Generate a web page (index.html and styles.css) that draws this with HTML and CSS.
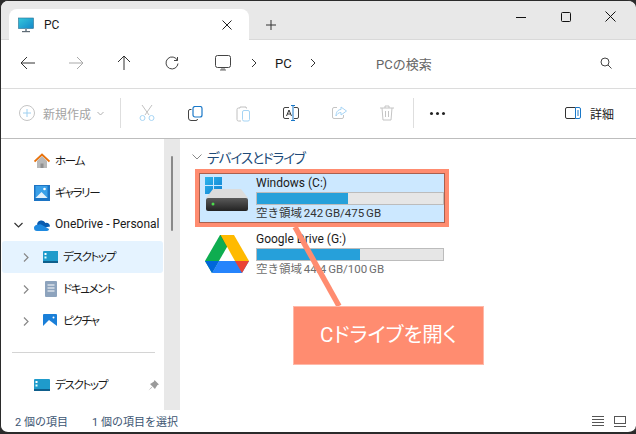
FILE: index.html
```html
<!DOCTYPE html>
<html lang="ja">
<head>
    <meta charset="UTF-8">
    <title>PC</title>
    <link rel="stylesheet" href="styles.css">
</head>
<body>
<div class="window">
    <!-- tab strip -->
    <div class="tabbar">
        <div class="tab">
            <svg class="tab-icon" width="16" height="16" viewBox="0 0 16 16"><defs><linearGradient id="scr" x1="0" y1="0" x2="1" y2="1"><stop offset="0" stop-color="#35c7dc"/><stop offset="1" stop-color="#1487c9"/></linearGradient></defs><rect x="0.5" y="1" width="15" height="10.5" fill="url(#scr)" stroke="#2a6f90" stroke-width="0.6"/><rect x="7" y="11.5" width="2" height="3" fill="#8a98a3"/><rect x="4" y="14" width="8" height="1.2" fill="#5f6b75"/></svg>
            <span class="tab-title">PC</span>
            <svg class="tab-close" width="10" height="10" viewBox="0 0 10 10"><path d="M.5.5l9 9M9.500.5l-9 9" stroke="#222" fill="none"/></svg>
        </div>
        <svg class="tab-plus" width="10" height="10" viewBox="0 0 10 10"><path d="M5 0v10M0 5h10" stroke="#333" fill="none"/></svg>
        <div class="win-controls">
            <span class="win-btn"><svg width="10" height="10" viewBox="0 0 10 10"><path d="M0 5.500h10" stroke="#111" fill="none"/></svg></span>
            <span class="win-btn"><svg width="10" height="10" viewBox="0 0 10 10"><rect x=".5" y=".5" width="9" height="9" rx="1" stroke="#111" fill="none"/></svg></span>
            <span class="win-btn"><svg width="11" height="11" viewBox="0 0 11 11"><path d="M.5.5l10 10M10.500.5l-10 10" stroke="#111" fill="none"/></svg></span>
        </div>
    </div>

    <!-- address row -->
    <div class="navbar">
        <span class="nav-btn"><svg width="16" height="14" viewBox="0 0 16 14"><path d="M15 7H1M7 1L1 7l6 6" stroke="#333" fill="none"/></svg></span>
        <span class="nav-btn"><svg width="16" height="14" viewBox="0 0 16 14"><path d="M1 7h14M9 1l6 6-6 6" stroke="#a9a9a9" fill="none"/></svg></span>
        <span class="nav-btn"><svg width="14" height="16" viewBox="0 0 14 16"><path d="M7 15V1M1 7l6-6 6 6" stroke="#333" fill="none"/></svg></span>
        <span class="nav-btn"><svg width="14" height="14" viewBox="0 0 14 14"><path d="M12.500 4.500A6 6 0 1 0 13 7.500M12.500 1v3.500H9" stroke="#444" fill="none"/></svg></span>
        <div class="crumbs">
            <svg width="16" height="16" viewBox="0 0 16 16"><rect x=".5" y=".5" width="15" height="12" rx="2" stroke="#444" fill="none"/><path d="M5 15h6M7 13v2M9 13v2" stroke="#666" fill="none"/></svg>
            <svg class="crumb-sep" width="6" height="10" viewBox="0 0 6 10"><path d="M1 1l4 4-4 4" stroke="#333" fill="none"/></svg>
            <span class="crumb">PC</span>
            <svg class="crumb-sep" width="6" height="10" viewBox="0 0 6 10"><path d="M1 1l4 4-4 4" stroke="#333" fill="none"/></svg>
        </div>
        <span class="search-text">PCの検索</span>
        <svg class="search-icon" width="12" height="12" viewBox="0 0 12 12"><circle cx="5" cy="5" r="4" stroke="#444" fill="none"/><path d="M8 8l3.500 3.500" stroke="#444" fill="none"/></svg>
    </div>

    <!-- command bar -->
    <div class="toolbar">
        <div class="new-btn">
            <svg width="16" height="16" viewBox="0 0 16 16"><circle cx="8" cy="8" r="7.500" stroke="#c4c4c4" fill="none"/><path d="M8 4v8M4 8h8" stroke="#9fd0f0" fill="none"/></svg>
            <span>新規作成</span>
            <svg width="7" height="5" viewBox="0 0 7 5"><path d="M.5 1l3 3 3-3" stroke="#b0b0b0" fill="none"/></svg>
        </div>
        <span class="tool-sep"></span>
        <span class="tool-btn"><svg width="16" height="16" viewBox="0 0 16 16"><path d="M3 0l7 10M13 0L6 10" stroke="#c0c0c0" fill="none"/><circle cx="3.500" cy="13" r="2.500" stroke="#a6d4f4" fill="none"/><circle cx="12.500" cy="13" r="2.500" stroke="#a6d4f4" fill="none"/></svg></span>
        <span class="tool-btn"><svg width="15" height="15" viewBox="0 0 15 15"><path d="M3.500 3.500H2a1.500 1.500 0 0 0-1.500 1.500v7A2.500 2.500 0 0 0 3 14.500h5a1.500 1.500 0 0 0 1.500-1.500" stroke="#444" fill="none"/><rect x="5" y=".5" width="9" height="10.500" rx="2" stroke="#1a78c8" stroke-width="1.200" fill="none"/></svg></span>
        <span class="tool-btn"><svg width="15" height="17" viewBox="0 0 15 17"><path d="M4 3H2.500A1.500 1.500 0 0 0 1 4.500v10A1.500 1.500 0 0 0 2.500 16H5M4 3V2h6v1h1" stroke="#c0c0c0" fill="none"/><rect x="6.500" y="5.500" width="7" height="10.500" rx="1.500" stroke="#a6d4f4" fill="none"/></svg></span>
        <span class="tool-btn"><svg width="16" height="16" viewBox="0 0 16 16"><path d="M6 2.500H2A1.500 1.500 0 0 0 .5 4v8A1.500 1.500 0 0 0 2 13.500h4M11 2.500h3A1.500 1.500 0 0 1 15.500 4v8a1.500 1.500 0 0 1-1.500 1.500h-3" stroke="#444" fill="none"/><path d="M3.500 11l2.500-6 2.500 6M4.500 9h3" stroke="#333" fill="none"/><path d="M8 .5h4M8 15.500h4M10 .5v15" stroke="#1a78c8" fill="none"/></svg></span>
        <span class="tool-btn"><svg width="15" height="14" viewBox="0 0 15 14"><path d="M5 1.500H2A1.500 1.500 0 0 0 .5 3v8A1.500 1.500 0 0 0 2 12.500h8a1.500 1.500 0 0 0 1.500-1.500V9" stroke="#c4c4c4" fill="none"/><path d="M9 1l5.500 4L9 9V6.500C6.500 6.500 5 8 4 10c0-4 2-6.500 5-6.500z" stroke="#a6d4f4" fill="none"/></svg></span>
        <span class="tool-btn"><svg width="14" height="16" viewBox="0 0 14 16"><path d="M0 3h14M5 3V1h4v2M2 3l1 12h8l1-12M5.500 6v6M8.500 6v6" stroke="#c4c4c4" fill="none"/></svg></span>
        <span class="tool-sep sep-2"></span>
        <span class="dots"><i></i><i></i><i></i></span>
        <div class="details">
            <svg width="16" height="12" viewBox="0 0 16 12"><path d="M10.500.5H2A1.500 1.500 0 0 0 .5 2v8A1.500 1.500 0 0 0 2 11.500h8.500" stroke="#333" fill="none"/><path d="M10.500.5v11h3.500a1.500 1.500 0 0 0 1.500-1.500V2A1.500 1.500 0 0 0 14 .5z" stroke="#1a78c8" fill="none"/><path d="M12 4h2M12 6h2M12 8h2" stroke="#1a78c8" fill="none"/></svg>
            <span>詳細</span>
        </div>
    </div>

    <div class="main">
        <!-- left pane -->
        <div class="sidebar">
            <div class="side-row lvl-0">
                <span class="chev"></span>
                <svg width="16" height="16" viewBox="0 0 16 16"><path d="M3 8v7h10V8L8 3z" fill="#b8b8b8"/><rect x="6.500" y="10.500" width="3" height="4.500" fill="#8f8f8f"/><path d="M.5 8.500L8 1.500l7.500 7" stroke="#e8720c" stroke-width="1.800" fill="none"/></svg>
                <span class="ja">ホーム</span>
            </div>
            <div class="side-row lvl-0">
                <span class="chev"></span>
                <svg width="16" height="16" viewBox="0 0 16 16"><rect width="16" height="16" fill="#1c74c4"/><rect x="1.500" y="1" width="12" height="12" fill="#3aa0e8"/><path d="M1.500 13l6-6 6 6z" fill="#e4f1fb"/><circle cx="10.500" cy="4" r="1.300" fill="#fff"/></svg>
                <span class="ja">ギャラリー</span>
            </div>
            <div class="side-row lvl-0">
                <span class="chev"><svg width="9" height="6" viewBox="0 0 9 6"><path d="M.5 1l4 4 4-4" stroke="#333" stroke-width="1.200" fill="none"/></svg></span>
                <svg width="16" height="11" viewBox="0 0 16 11"><path d="M3 4.500A4.500 4.500 0 0 1 11.500 3 3.500 3.500 0 0 1 16 6.500L8 8z" fill="#0a5cb0"/><path d="M0 8a3 3 0 0 1 4-3c1-1 3-1 4 0l7 4c0 1-1 2-2 2H3a3 3 0 0 1-3-3z" fill="#1f8ae0"/></svg>
                <span>OneDrive - Personal</span>
            </div>
            <div class="side-row lvl-1 active">
                <span class="chev"><svg width="6" height="9" viewBox="0 0 6 9"><path d="M1 .5l4 4-4 4" stroke="#888" stroke-width="1.200" fill="none"/></svg></span>
                <svg width="16" height="12" viewBox="-1 0 16 12"><use href="#desk"/></svg>
                <span class="ja">デスクトップ</span>
            </div>
            <div class="side-row lvl-1">
                <span class="chev"><svg width="6" height="9" viewBox="0 0 6 9"><path d="M1 .5l4 4-4 4" stroke="#888" stroke-width="1.200" fill="none"/></svg></span>
                <svg width="16" height="16" viewBox="-3 0 16 16"><rect width="12" height="16" rx="1" fill="#8da3bd"/><path d="M2.500 4h7M2.500 7h7M2.500 10h7" stroke="#fff" fill="none"/></svg>
                <span class="ja">ドキュメント</span>
            </div>
            <div class="side-row lvl-1">
                <span class="chev"><svg width="6" height="9" viewBox="0 0 6 9"><path d="M1 .5l4 4-4 4" stroke="#888" stroke-width="1.200" fill="none"/></svg></span>
                <svg width="16" height="14" viewBox="-1 0 16 14"><rect width="14" height="14" rx="1" fill="#1a7fd8"/><path d="M0 12l6-6 8 6v2H0z" fill="#fff"/><circle cx="10.500" cy="3.500" r="1" fill="#fff"/></svg>
                <span class="ja">ピクチャ</span>
            </div>
            <div class="side-divider"></div>
            <div class="side-row lvl-0">
                <span class="chev"></span>
                <svg width="16" height="12" viewBox="0 0 16 12"><g id="desk"><rect width="16" height="11.500" rx="1" fill="#1f9bcb"/><rect y="10" width="16" height="2" fill="#0f5f8c"/><rect x="1.500" y="2" width="2" height="2" fill="#fff"/><rect x="1.500" y="5.500" width="2" height="2" fill="#dff"/></g></svg>
                <span class="ja">デスクトップ</span>
                <svg class="pin" width="11" height="11" viewBox="0 0 11 11"><path d="M6.500 0L11 4.500 9.500 5 7.500 8 7 9 2 4l1-.5L6 1.500zM3.500 7L.5 10.500 4 7.500z" fill="#9a9a9a"/></svg>
            </div>
        </div>
        <div class="side-scroll"><span class="side-thumb"></span></div>

        <!-- drives -->
        <div class="content">
            <div class="group-head">
                <svg width="10" height="6" viewBox="0 0 10 6"><path d="M.5.500l4.500 4.500 4.500-4.500" stroke="#888" fill="none"/></svg>
                <span>デバイスとドライブ</span>
            </div>
            <div class="drive selected">
                <svg class="drive-icon" width="44" height="36" viewBox="0 0 44 36"><defs><linearGradient id="hdd" x1="0" y1="0" x2="0" y2="1"><stop offset="0" stop-color="#5a5a5a"/><stop offset="1" stop-color="#222"/></linearGradient><linearGradient id="win" x1="0" y1="0" x2="1" y2="1"><stop offset="0" stop-color="#2cb4ec"/><stop offset="1" stop-color="#0f7fd0"/></linearGradient></defs><path d="M1 0h8v8H1zM10 0h8v8h-8zM1 9h8v8H1zM10 9h8v8h-8z" fill="url(#win)"/><path d="M9 12h28l7 9H2z" fill="#dcdcdc"/><rect x="2" y="21" width="42" height="13" rx="2" fill="url(#hdd)"/><circle cx="9" cy="27" r="1.500" fill="#4cdc4c"/></svg>
                <div class="drive-info">
                    <div class="drive-name">Windows (C:)</div>
                    <div class="drive-bar"><span class="drive-fill" style="width:49%"></span></div>
                    <div class="drive-free">空き領域 242 GB/475 GB</div>
                </div>
            </div>
            <div class="drive">
                <svg class="drive-icon gdrive" width="44" height="40" viewBox="0 0 44 40"><path d="M15 1h14l-7 12-7 0z" fill="#0a8043"/><path d="M15 1L0 27l7 12 15-26z" fill="#0ead50"/><path d="M29 1l15 26H30L15.500 1z" fill="#ffba00"/><path d="M7 39l7-12h30l-7 12z" fill="#2684fc"/><path d="M0 27h14L7 39z" fill="#0066da"/><path d="M44 27H30l7 12z" fill="#ea4335"/><path d="M22 15l-6 12h12z" fill="#fff"/></svg>
                <div class="drive-info">
                    <div class="drive-name">Google Drive (G:)</div>
                    <div class="drive-bar"><span class="drive-fill" style="width:55.500%"></span></div>
                    <div class="drive-free grey">空き領域 44.4 GB/100 GB</div>
                </div>
            </div>
        </div>
    </div>

    <div class="statusbar">
        <span class="status-count">2 個の項目</span>
        <span>1 個の項目を選択</span>
        <div class="view-btns">
            <svg width="12" height="11" viewBox="0 0 12 11"><path d="M0 .5h12M0 3.500h12M0 6.500h12M0 9.500h12" stroke="#555" fill="none"/></svg>
            <svg width="12" height="11" viewBox="0 0 12 11"><rect x=".5" y=".5" width="11" height="7" stroke="#555" fill="none"/><path d="M0 10.500h12" stroke="#555" fill="none"/></svg>
        </div>
    </div>

    <!-- annotation drawn over the window -->
    <div class="note-frame"></div>
    <svg class="note-line" width="636" height="434" viewBox="0 0 636 434"><path d="M295 227L339 306" stroke="#ff8c70" stroke-width="5.500" fill="none"/></svg>
    <div class="note-box">Cドライブを開く</div>
</div>
</body>
</html>
```

FILE: styles.css
```css
* {
    box-sizing: border-box;
}
body {
    margin: 0;
    background: #2b2b2b;
    font-family: Roboto, "Noto Sans CJK JP", sans-serif;
    font-size: 12px;
    color: #1a1a1a;
}
svg {
    display: block;
    flex: none;
}
.window {
    position: relative;
    width: 636px;
    height: 434px;
    background: #fff;
    border: 1px solid #2b2b2b;
    border-right: 0;
    border-bottom-width: 2px;
    border-radius: 8px;
    overflow: hidden;
}

/* tabs */
.tabbar {
    display: flex;
    align-items: flex-start;
    height: 39px;
    padding: 8px 0 0 8px;
    background: #e8e8e8;
    border-bottom: 1px solid #d9d9d9;
}
.tab {
    display: flex;
    align-items: center;
    width: 240px;
    height: 31px;
    margin-bottom: -1px;
    padding: 0 17px 0 9px;
    background: #fff;
    border-radius: 8px 8px 0 0;
}
.tab-title {
    margin-left: 10px;
    font-size: 12px;
    flex: 1;
}
.tab-plus {
    margin: 11px 0 0 17px;
}
.win-controls {
    display: flex;
    margin: -8px 3px 0 auto;
}
.win-btn {
    display: flex;
    align-items: center;
    justify-content: center;
    width: 45px;
    height: 31px;
}

/* address row */
.navbar {
    display: flex;
    align-items: center;
    height: 49px;
    padding: 0 0 2px 3px;
    border-bottom: 1px solid #dcdcdc;
}
.nav-btn {
    display: flex;
    align-items: center;
    justify-content: center;
    width: 48px;
    height: 32px;
}
.crumbs {
    display: flex;
    align-items: center;
    margin-left: 19px;
    width: 161px;
}
.crumb-sep {
    margin-left: 20px;
}
.crumb {
    width: 18px;
    margin-left: 18px;
    font-size: 13px;
}
.crumbs .crumb + .crumb-sep {
    margin-left: 17px;
}
.search-text {
    font-size: 13px;
    color: #666;
}
.search-icon {
    margin-left: auto;
    margin-right: 24px;
}

/* command bar */
.toolbar {
    display: flex;
    align-items: center;
    height: 46px;
    padding: 2px 0 0 18px;
}
.new-btn {
    display: flex;
    align-items: center;
    width: 101px;
    color: #a3a3a3;
}
.new-btn span {
    margin: 0 6px 0 8px;
}
.tool-sep {
    width: 1px;
    height: 30px;
    background: #dedede;
}
.tool-btn {
    display: flex;
    align-items: center;
    justify-content: center;
    width: 48px;
}
.tool-sep + .tool-btn {
    margin-left: 2px;
}
.sep-2 {
    margin-left: 2px;
}
.dots {
    display: flex;
    gap: 3px;
    margin-left: 16px;
}
.dots i {
    width: 3px;
    height: 3px;
    background: #222;
    border-radius: 50%;
}
.details {
    display: flex;
    align-items: center;
    gap: 9px;
    margin-left: auto;
    margin-right: 22px;
}

/* main area */
.main {
    display: flex;
    height: 272px;
    margin-top: 3px;
    border-top: 1px solid #bdbdbd;
}
.sidebar {
    width: 163px;
    padding: 6px 1px 0;
    overflow: hidden;
    font-feature-settings: "palt";
}
.side-row {
    display: flex;
    align-items: center;
    height: 32px;
    border-radius: 3px;
}
.side-row span:not(.chev) {
    margin-bottom: 2px;
    white-space: nowrap;
}
.side-row .ja {
    font-size: 11.500px;
    letter-spacing: -1.300px;
}
.lvl-0 {
    padding-left: 11px;
}
.lvl-1 {
    padding-left: 19px;
}
.chev {
    display: flex;
    align-items: center;
    justify-content: center;
    width: 10px;
    margin-right: 11px;
    flex: none;
}
.side-row svg + span {
    margin-left: 5px;
}
.active {
    background: #e5f3ff;
}
.side-divider {
    height: 1px;
    margin: 15px 8px 16px 10px;
    background: #d4d4d4;
}
.pin {
    margin-left: auto;
    margin-right: 4px;
}
.side-scroll {
    width: 16px;
    background: #e8e8e8;
}
.side-thumb {
    display: block;
    width: 2px;
    height: 75px;
    margin: 17px 0 0 7px;
    background: #8a8a8a;
    border-radius: 1px;
}

/* drives */
.content {
    flex: 1;
    padding: 8px 0 0 12px;
}
.group-head {
    display: flex;
    align-items: center;
    gap: 5px;
    height: 20px;
    font-size: 13.500px;
    letter-spacing: -1px;
    color: #204a78;
    font-feature-settings: "palt";
}
.drive {
    display: flex;
    justify-content: space-between;
    width: 248px;
    height: 52px;
    margin: 4px 0 0 7px;
    padding: 2px 3px 0 5px;
}
.selected {
    background: #cce8ff;
    margin-top: 6px;
}
.drive-icon {
    margin-top: 2px;
}
.gdrive {
    margin: 3px 0 0 1px;
}
.drive-info {
    width: 188px;
}
.drive-name {
    height: 17px;
    line-height: 17px;
}
.drive-bar {
    height: 13px;
    background: #e6e6e6;
    border: 1px solid #bcbcbc;
}
.drive-fill {
    display: block;
    height: 100%;
    background: #26a0da;
}
.drive-free {
    height: 17px;
    font-size: 11.500px;
    line-height: 17px;
    word-spacing: -1px;
    color: #333;
}
.grey {
    color: #6d6d6d;
}

/* status */
.statusbar {
    display: flex;
    align-items: center;
    height: 22px;
    padding-left: 14px;
    font-size: 11px;
    color: #3c5572;
}
.status-count {
    width: 77px;
}
.view-btns {
    display: flex;
    gap: 10px;
    margin-left: auto;
    margin-right: 10px;
}

/* annotation */
.note-frame {
    position: absolute;
    left: 194px;
    top: 168px;
    width: 254px;
    height: 58px;
    border: 4px solid #ff8c70;
    box-shadow: inset 0 0 0 1px #a9604f;
}
.note-line {
    position: absolute;
    left: -1px;
    top: -1px;
}
.note-box {
    position: absolute;
    left: 292px;
    top: 305px;
    width: 191px;
    height: 59px;
    background: #ff8c70;
    border: 1px solid #ffb8a8;
    color: #fff;
    font-size: 20.500px;
    line-height: 56px;
    text-align: center;
    font-feature-settings: "palt";
}
```
